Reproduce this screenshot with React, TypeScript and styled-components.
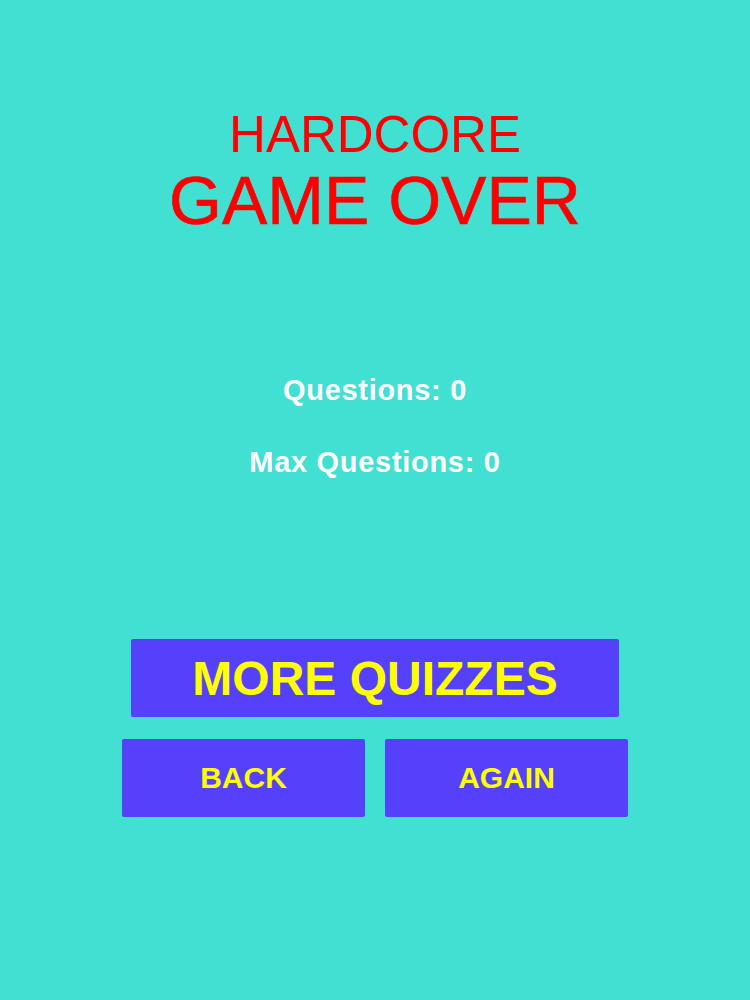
import React from "react";
import styled, { createGlobalStyle } from "styled-components";

const GlobalStyle = createGlobalStyle`
  html, body {
    margin: 0;
    padding: 0;
    background: #42e0d2;
    font-family: "Liberation Sans", Arial, sans-serif;
  }
`;

const Screen = styled.div`
  width: 750px;
  height: 1000px;
  background: #42e0d2;
  display: flex;
  flex-direction: column;
  align-items: center;
`;

const Title = styled.div`
  margin-top: 107px;
  display: flex;
  flex-direction: column;
  align-items: center;
  color: #ff0000;
`;

const Mode = styled.div`
  font-size: 51px;
  line-height: 56px;
`;

const Over = styled.div`
  font-size: 68px;
  line-height: 74px;
  -webkit-text-stroke: 0.6px #ff0000;
`;

const Stats = styled.div`
  margin-top: 136px;
  display: flex;
  flex-direction: column;
  align-items: center;
  gap: 38px;
  color: #ffffff;
  font-weight: bold;
  font-size: 29px;
  line-height: 34px;
  letter-spacing: 0.7px;
`;

const Buttons = styled.div`
  margin-top: 160px;
  display: flex;
  flex-direction: column;
  align-items: center;
  gap: 22px;
`;

const Row = styled.div`
  display: flex;
  gap: 20px;
`;

const Btn = styled.button<{ $w: number; $size: number }>`
  width: ${(p) => p.$w}px;
  height: 78px;
  border: none;
  border-radius: 2px;
  background: #5541fb;
  color: #ffff00;
  font-family: "Liberation Sans", Arial, sans-serif;
  font-weight: bold;
  font-size: ${(p) => p.$size}px;
  display: flex;
  align-items: center;
  justify-content: center;
  padding: 0;
  cursor: pointer;
`;

export default function App() {
  return (
    <>
      <GlobalStyle />
      <Screen>
        <Title>
          <Mode>HARDCORE</Mode>
          <Over>GAME OVER</Over>
        </Title>
        <Stats>
          <div>Questions: 0</div>
          <div>Max Questions: 0</div>
        </Stats>
        <Buttons>
          <Btn $w={488} $size={48}>MORE QUIZZES</Btn>
          <Row>
            <Btn $w={243} $size={30}>BACK</Btn>
            <Btn $w={243} $size={30}>AGAIN</Btn>
          </Row>
        </Buttons>
      </Screen>
    </>
  );
}
